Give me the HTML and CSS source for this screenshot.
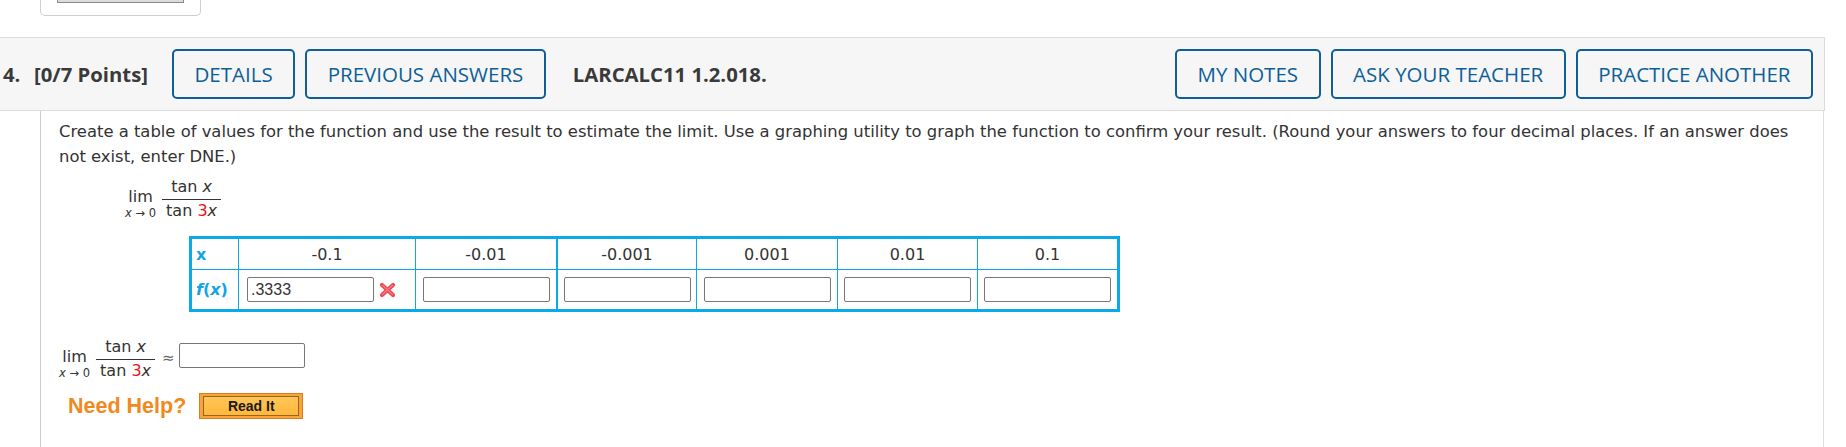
FILE: index.html
```html
<!DOCTYPE html>
<html>
<head>
<meta charset="utf-8">
<link rel="stylesheet" href="styles.css">
</head>
<body>
<div class="topbox"><div class="topbtn"></div></div>

<div class="qhead">
  <span class="qnum">4.</span>
  <span class="qpts">[0/7 Points]</span>
  <span class="btn">DETAILS</span>
  <span class="btn">PREVIOUS ANSWERS</span>
  <span class="qref">LARCALC11 1.2.018.</span>
  <span class="spacer"></span>
  <span class="btn">MY NOTES</span>
  <span class="btn">ASK YOUR TEACHER</span>
  <span class="btn btn-last">PRACTICE ANOTHER</span>
</div>

<div class="qbody">
  <p class="prompt">Create a table of values for the function and use the result to estimate the limit. Use a graphing utility to graph the function to confirm your result. (Round your answers to four decimal places. If an answer does not exist, enter DNE.)</p>

  <div class="math math-top">
    <span class="lim"><span class="lim-word">lim</span><span class="lim-sub"><i>x</i> &rarr; 0</span></span>
    <span class="frac"><span class="num">tan <i>x</i></span><span class="bar"></span><span class="den">tan <span class="red">3</span><i>x</i></span></span>
  </div>

  <table class="vals">
    <tr class="row-x">
      <th class="lbl">x</th>
      <td class="c1">-0.1</td>
      <td class="c2">-0.01</td>
      <td class="c3">-0.001</td>
      <td class="c4">0.001</td>
      <td class="c5">0.01</td>
      <td class="c6">0.1</td>
    </tr>
    <tr class="row-f">
      <th class="lbl"><i>f</i>(<i>x</i>)</th>
      <td class="c1"><span class="cellwrap"><span class="inp">.3333</span><svg class="xmark" width="17" height="16" viewBox="0 0 17 16"><path d="M3 3 L14 13 M14 3 L3 13" stroke="#ee4a52" stroke-width="4.2" stroke-linecap="round"/><path d="M3.6 3.4 L13.4 12.4 M13.4 3.4 L3.6 12.4" stroke="#f98088" stroke-width="1.2" stroke-linecap="round"/></svg></span></td>
      <td class="c2"><span class="inp"></span></td>
      <td class="c3"><span class="inp"></span></td>
      <td class="c4"><span class="inp"></span></td>
      <td class="c5"><span class="inp"></span></td>
      <td class="c6"><span class="inp"></span></td>
    </tr>
  </table>

  <div class="math math-bottom">
    <span class="lim"><span class="lim-word">lim</span><span class="lim-sub"><i>x</i> &rarr; 0</span></span>
    <span class="frac"><span class="num">tan <i>x</i></span><span class="bar"></span><span class="den">tan <span class="red">3</span><i>x</i></span></span>
    <span class="approx">&asymp;</span>
    <span class="inp inp-ans"></span>
  </div>

  <div class="help">
    <span class="needhelp">Need Help?</span>
    <span class="readit"><span class="readit-in">Read It</span></span>
  </div>
</div>
</body>
</html>
```

FILE: styles.css
```css
html, body {
  margin: 0;
  padding: 0;
  background: #ffffff;
}
body {
  width: 1846px;
  height: 447px;
  overflow: hidden;
  font-family: "DejaVu Sans", Verdana, sans-serif;
  color: #333333;
}

.topbox {
  margin-left: 40px;
  width: 159px;
  height: 15px;
  border: 1px solid #cfcfcf;
  border-top: none;
  border-radius: 0 0 5px 5px;
}
.topbtn {
  margin-left: 16px;
  width: 125px;
  height: 2px;
  background: #dcdcdc;
  border: 1px solid #8a8a8a;
  border-top: none;
}

.qhead {
  margin-top: 21px;
  width: 1824px;
  height: 72px;
  background: #f6f6f6;
  border-top: 1px solid #dcdcdc;
  border-bottom: 1px solid #dcdcdc;
  border-right: 1px solid #dcdcdc;
  display: flex;
  align-items: center;
  font-family: "Open Sans", sans-serif;
  font-size: 20.3px;
}
.qnum {
  font-weight: 700;
  color: #3a3a3a;
  margin-left: 3px;
  width: 31px;
}
.qpts {
  font-weight: 700;
  color: #3a3a3a;
  margin-right: 24px;
}
.btn {
  height: 50px;
  box-sizing: border-box;
  border: 2px solid #0e5f97;
  border-radius: 5px;
  color: #0e5f97;
  font-size: 20.5px;
  padding: 0 20.5px;
  display: flex;
  align-items: center;
  margin-right: 10px;
}
.btn-last { margin-right: 11px; }
.qref {
  font-weight: 700;
  color: #3a3a3a;
  margin-left: 17px;
}
.spacer { flex: 1; }

.qbody {
  margin-left: 40px;
  width: 1746px;
  height: 340px;
  border-left: 1px solid #cccccc;
  border-right: 1px solid #dddddd;
  padding-left: 18px;
  padding-right: 18px;
}
.prompt {
  margin: 0;
  padding-top: 8px;
  font-size: 16.4px;
  line-height: 25px;
  color: #333333;
}

.math {
  display: flex;
  align-items: flex-end;
  font-size: 16px;
  color: #333;
}
.math-top {
  margin-left: 66px;
  margin-top: 10px;
}
.lim {
  display: inline-flex;
  flex-direction: column;
  align-items: center;
  margin-right: 6px;
  line-height: 1;
}
.lim-word { font-size: 16px; }
.lim-sub { font-size: 11.5px; margin-top: 2px; line-height: 12px; }
.frac {
  display: inline-flex;
  flex-direction: column;
  align-items: stretch;
  text-align: center;
  line-height: 1;
}
.num { padding: 0 4px; }
.bar {
  height: 1px;
  border-top: 1px solid #333;
  margin-top: 4px;
}
.den { padding: 2px 4px 0; }
.red { color: #e8141c; }

.vals {
  margin-top: 17px;
  margin-left: 130px;
  border-collapse: separate;
  border-spacing: 0;
  table-layout: fixed;
  border: 3px solid #0aaae8;
  font-size: 16px;
  color: #333;
}
.vals th, .vals td {
  box-sizing: border-box;
  padding: 0;
  text-align: center;
  font-weight: normal;
  border-right: 1px solid #0aaae8;
}
.row-x th, .row-x td {
  height: 31px;
  border-bottom: 1px solid #0aaae8;
}
.row-f th, .row-f td { height: 39px; }
.vals th.lbl {
  width: 47px;
  text-align: left;
  padding-left: 4px;
  color: #12a5e4;
  font-weight: 700;
}
.vals .c1 { width: 177px; }
.vals .c2 { width: 142px; border-right-width: 2px; }
.vals .c3 { width: 139px; }
.vals .c4 { width: 141px; }
.vals .c5 { width: 140px; }
.vals .c6 { width: 139px; border-right: none; }
.cellwrap {
  display: flex;
  align-items: center;
  padding-left: 8px;
}
.inp {
  display: inline-block;
  width: 127px;
  height: 25px;
  box-sizing: border-box;
  border: 1px solid #777777;
  border-radius: 2px;
  background: #fff;
  vertical-align: middle;
  font-family: "Liberation Sans", Arial, sans-serif;
  font-size: 16px;
  line-height: 23px;
  text-align: left;
  padding-left: 3px;
  color: #333;
}
.xmark { margin-left: 5px; }

.math-bottom {
  margin-top: 27px;
  margin-left: 0;
}
.approx {
  align-self: center;
  font-size: 15px;
  line-height: 1;
  color: #666;
  margin: 0 4px 0 7px;
  position: relative;
  top: -1px;
}
.inp-ans {
  width: 126px;
  align-self: flex-start;
  margin-top: 4px;
}

.help {
  display: flex;
  align-items: center;
  margin-top: 14px;
  margin-left: 9px;
}
.needhelp {
  font-family: "Liberation Sans", Arial, sans-serif;
  font-weight: 700;
  font-size: 21.5px;
  color: #f08a1e;
  margin-right: 13px;
}
.readit {
  display: inline-block;
  width: 104px;
  height: 26px;
  box-sizing: border-box;
  border: 1px solid #dc7c20;
  background: #f5a53a;
  padding: 2px 3px;
}
.readit-in {
  display: flex;
  align-items: center;
  justify-content: center;
  height: 100%;
  box-sizing: border-box;
  border: 1px solid #9a6420;
  background: linear-gradient(#ffc656, #ffb83c);
  font-family: "Liberation Sans", Arial, sans-serif;
  font-weight: 700;
  font-size: 14px;
  color: #1a1a1a;
}
```
